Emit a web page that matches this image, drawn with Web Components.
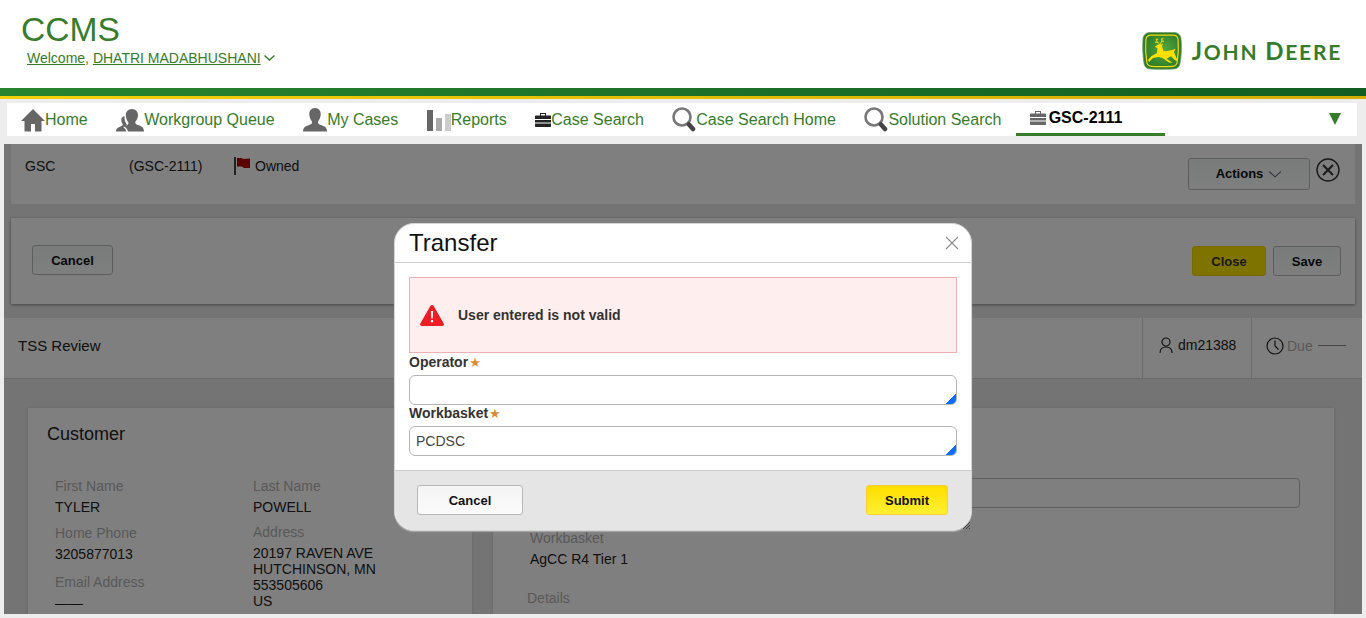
<!DOCTYPE html>
<html lang="en"><head><meta charset="utf-8"><title>CCMS</title>
<style>
html,body{margin:0;height:618px;overflow:hidden;background:#ededed;font-family:"Liberation Sans",Arial,sans-serif;color:#222}
</style></head><body>
<ccms-app></ccms-app>
<script>
const ICONS={
home:'<svg width="24" height="24" viewBox="0 0 24 24"><path fill="#666" d="M12 1 0 13h3.500v10.500h6.500V16h4v7.500h6.500V13H24z"/></svg>',
group:'<svg width="28" height="24" viewBox="0 0 28 24"><path fill="#666" d="M16 1c-4 0-6.500 3-6.200 6.500.2 2.600 1 4.800 2.400 6.500.5 1.200.2 2.300-.8 2.900l-3 1.500C10 19.500 11.500 21 12 23.500h16c0-3-1.400-4.600-4.500-5.900l-3-1.200c-1.200-.6-1.500-1.700-1-2.800 1.400-1.700 2.300-3.900 2.500-6.200C22.200 4 20 1 16 1z"/><path fill="#666" d="M8.500 8C6 8.500 5 10.500 5.300 12.800c.2 1.300.6 2.400 1.300 3.300.2.800 0 1.300-.7 1.700l-2.600 1.200C1.200 19.900 0 21 0 23.500h10.300c-.3-2-1.700-3.500-3-4.300l2.900-1.500c.7-.5.6-1 .2-1.800-.9-1.300-1.700-3.300-1.900-5.600z"/></svg>',
person:'<svg width="24" height="24" viewBox="0 0 24 24"><path fill="#666" d="M12 0C8 0 6 3 6.300 6.500c.2 2.800 1.100 5 2.500 6.700.5 1.300.2 2.300-1 3L3 18.200C1 19.200 0 20.800 0 23.500h24c0-2.700-1-4.300-3-5.300l-4.800-2c-1.200-.7-1.500-1.700-1-3 1.400-1.700 2.300-3.900 2.500-6.700C18 3 16 0 12 0z"/></svg>',
bars:'<svg width="24" height="22" viewBox="0 0 24 22"><rect x="0" y="1" width="6" height="21" fill="#666"/><rect x="9" y="9" width="6" height="13" fill="#aaa"/><rect x="18" y="5" width="6" height="17" fill="#ccc"/></svg>',
brief:c=>`<svg width="16" height="14" viewBox="0 0 16 14"><path fill="${c}" d="M5 0h6v2.500h-1V1H6v1.500H5zM1 2.500h14c.6 0 1 .4 1 1V6H0V3.500c0-.6.4-1 1-1zM0 7h16v2.500H0zM0 10.500h16V13c0 .6-.4 1-1 1H1c-.6 0-1-.4-1-1z"/></svg>`,
search:'<svg width="24" height="26" viewBox="0 0 24 26"><circle cx="10" cy="10" r="8.500" fill="none" stroke="#777" stroke-width="2.600"/><path d="M17 17.500l4 4.500" stroke="#444" stroke-width="4.500" stroke-linecap="round"/></svg>',
chev:(c,w=11,h=6,s=1)=>`<svg width="${w}" height="${h}" viewBox="0 0 11 6"><path d="M.5.500 5.500 5l5-4.500" fill="none" stroke="${c}" stroke-width="${s}"/></svg>`
};
function def(name,css,html,init){
  customElements.define(name,class extends HTMLElement{
    constructor(){super();const r=this.attachShadow({mode:'open'});
      r.innerHTML='<style>'+css+'</style>'+(typeof html==='function'?html(this):html);}
    connectedCallback(){if(!this._done){this._done=1;if(init)init(this)}}
  });
}
def('cc-logo',`:host{display:flex;align-items:center;gap:10px}
.t{font-family:Lato,"Liberation Sans",sans-serif;font-weight:700;color:#367c2b;font-size:21px;letter-spacing:1.750px;white-space:nowrap;line-height:24px}
.b{font-size:24px}`,
`<svg width="40" height="38" viewBox="0 0 40 38">
<defs><radialGradient id="g" cx=".55" cy=".45" r=".6"><stop offset="0" stop-color="#55a83f"/><stop offset="1" stop-color="#2e7d2c"/></radialGradient></defs>
<path fill="#2f7a2c" stroke="#6d9f66" stroke-width=".8" d="M8 .5h24c4 0 6.500 2.500 7 6 .8 8 .5 17-1 25-.5 3-2.500 5.500-6.500 5.500-7.500.4-16 .4-23 0-4 0-6-2.500-6.500-5.500C.8 23.500.4 14.500 1 6.500 1.500 3 4 .5 8 .5z"/>
<path fill="url(#g)" stroke="#f0dc10" stroke-width="1.200" d="M9 3.200h22c3 0 4.800 1.800 5.100 4.300.6 7 .3 15-.9 22.500-.4 2.600-2 4.300-4.800 4.400-6.500.4-13.800.4-20.800 0-2.800-.1-4.400-1.800-4.800-4.400C3.600 22.500 3.300 14.500 3.900 7.500 4.200 5 6 3.200 9 3.200z"/>
<path fill="none" stroke="#ffde00" stroke-width="1" d="M17.500 12c-1.500-1-3-2.500-3.500-5.500M15.800 10.500 13 10M14.700 8.500 16 6.500M18.500 12c.8-1.500 1.500-3 1.200-5.500M19.500 9.500 22 9M19.700 7.500 21.500 6"/>
<path fill="#ffde00" d="M13 14.500 17 12l2.500.5 1.500-1-1 3 1.500 4.500c3 .5 5.500-.5 9-1l3-1.500-1.500 3.500 1 2.500 3 7-3-1.200-4-4-4.500 2.500 6 4-3.500-.2-6.500-4.500-4-1-5.500 1L7 30l-1-2 3.500-4 5.500-3 .5-4.500-2-1.500z"/></svg>
<div class="t"><span class="b">J</span>OHN <span class="b">D</span>EERE</div>`);
def('cc-header',`:host{display:flex;justify-content:space-between;height:88px;background:#fff;box-sizing:border-box;padding:0 24px 0 21px}
h1{margin:0;font-weight:400;font-size:33.600px;line-height:38px;color:#367c2b;padding-top:11px}
.w{margin:1px 0 0 6px;font-size:14px;line-height:16px;color:#367c2b;display:flex;align-items:center}
.w span{white-space:pre}
u{text-underline-offset:1px}
.w svg{margin-left:3px}
cc-logo{align-self:flex-start;margin-top:32px}`,
`<div><h1>CCMS</h1><p class="w"><span><u>Welcome,</u> <u>DHATRI MADABHUSHANI</u></span>${ICONS.chev('#367c2b',11,6,1.400)}</p></div><cc-logo></cc-logo>`);
def('cc-band',`:host{display:block;height:8px;background:linear-gradient(90deg,#28842f,#125e22);border-bottom:3px solid;border-image:linear-gradient(90deg,#f5d000,#d6ac00) 1}`,'');
def('cc-nav-item',`:host{display:flex;align-items:center;height:33px;padding:0 14.250px;color:#367c2b;font-size:16px;white-space:nowrap;box-sizing:border-box}
:host(:first-child){padding-left:14px}
:host([active]){width:149px;color:#000;font-weight:700;border-bottom:3px solid #367c2b;padding-left:14px}
::slotted(span){display:flex;align-items:center}
:host([active]) ::slotted(span){margin-right:3px}`,'<slot name="icon"></slot><slot></slot>');
def('cc-nav',`:host{display:flex;align-items:stretch;margin:4px 9px 8px 7px;height:33px;background:#fff;position:relative}
.tri{margin:10px 16px 0 auto;width:0;height:0;border-left:6px solid transparent;border-right:6px solid transparent;border-top:12px solid #367c2b}`,
`<slot></slot><div class="tri"></div>`);
def('cc-button',`:host{display:inline-flex;align-items:center;justify-content:center;gap:5px;box-sizing:border-box;height:30px;border:1px solid #b8b8b8;border-radius:3px;background:linear-gradient(#f4f4f4,#fbfbfb);color:#111;font-size:13px;font-weight:700}
:host([kind=yellow]){background:linear-gradient(#ffdd00,#fff033);border-color:#ffcc33}
:host([kind=close]){background:#ffe600;border-color:#f0d000;color:#333}
:host([kind=tint]){background:linear-gradient(#f3f8f8,#fdfdfd);border-color:#bbb}`,'<slot></slot>');
def('cc-card',`:host{display:block;background:#fff;box-sizing:border-box}`,'<slot></slot>');
def('cc-field',`:host{display:block;font-size:14px;line-height:16px}
.l{color:#b2b2b2;margin-bottom:5px}
.v{color:#222}`,el=>`<div class="l">${el.getAttribute('label')}</div><div class="v"><slot></slot></div>`);
def('cc-modal',`:host{position:absolute;left:390px;top:79px;width:578px;height:308px;box-sizing:border-box;background:#fff;border:1px solid #d4d4d4;border-radius:20px;display:flex;flex-direction:column;color:#333;font-size:14px;box-shadow:0 1px 1px #aaa}
header{display:flex;justify-content:space-between;align-items:center;height:39px;border-bottom:1px solid #ccc;padding:0 14px 1px;flex:none;box-sizing:border-box}
h2{margin:0;font-weight:400;font-size:24px;color:#111}
main{flex:1;padding:14px 14px 0}
.al{display:flex;align-items:center;gap:14px;height:76px;box-sizing:border-box;background:#ffeeee;border:1px solid #edb1b4;padding-left:10px;font-weight:700}
label{display:block;font-weight:700;line-height:16px}
i{color:#d98c33;font:normal 13px/0 "DejaVu Sans",sans-serif;margin-left:1px}
.in{margin-top:5px;height:30px;box-sizing:border-box;border:1px solid #b5b5b5;border-radius:6px;padding:0 6px;line-height:28px;background:linear-gradient(135deg,#fff calc(100% - 7.500px),#0d6efd calc(100% - 7.500px));color:#444}
footer{flex:none;height:60px;box-sizing:border-box;background:#e5e5e5;border-top:1px solid #ccc;display:flex;justify-content:space-between;padding:14px 23px 0 22px;position:relative;border-radius:0 0 19px 19px}
.grip{position:absolute;right:0;bottom:0}
cc-button.c{width:106px}
cc-button.s{width:82px}`,
`<header><h2>Transfer</h2><svg width="14" height="14" viewBox="0 0 14 14" style="margin-right:-2px"><path d="M1 1l12 12M13 1 1 13" stroke="#8b8b8b" stroke-width="1.100"/></svg></header>
<main><div class="al"><svg width="24" height="21" viewBox="0 0 24 21"><path fill="#ee1c25" d="M12 0c.7 0 1.300.4 1.700 1l10 17.500c.7 1.200-.2 2.500-1.500 2.500H1.800C.5 21-.4 19.700.3 18.500L10.300 1c.4-.6 1-1 1.700-1z"/><path fill="#fff" d="M10.900 6h2.200l-.4 7.500h-1.400zM10.900 15h2.200v2.300h-2.200z"/></svg><span>User entered is not valid</span></div>
<label style="margin-top:1px">Operator<i>★</i></label><div class="in"></div>
<label>Workbasket<i>★</i></label><div class="in">PCDSC</div></main>
<footer><cc-button class="c" kind="plain">Cancel</cc-button><cc-button class="s" kind="yellow">Submit</cc-button>
<svg class="grip" width="10" height="10" viewBox="0 0 10 10"><path d="M9 2 2 9M9 5 5 9M9 8 8 9" stroke="#444" stroke-width="1"/></svg></footer>`);
def('cc-case',`:host{display:block;height:470px;margin:0 4px 0 4px;position:relative;overflow:hidden;background:#e9e9e9;font-size:14px}
.overlay{position:absolute;inset:0;background:rgba(0,0,0,.5)}
.c1{margin:0 7px 14px 7px;height:60px;display:flex;align-items:flex-start;padding:14px 14px 0 14px;background:#fff;line-height:16px;box-sizing:border-box;position:relative}
.c1 span{display:block}
.c1 .g{width:104px}.c1 .n{width:105px}
.c1 .o{display:flex;align-items:center;gap:5px;height:18px;margin-top:-1px}
.c2{margin:0 7px 14px 7px;height:86px;background:#fff;box-shadow:0 1px 3px rgba(0,0,0,.4);display:flex;padding:27px 14px 0 21px;box-sizing:border-box}
.c2 .cn{width:81px}
.cl{width:74px;margin-left:auto;margin-top:1px}
.sv{width:68px;margin-left:7px;margin-top:1px}
.c3{height:61px;background:#fff;border-bottom:1px solid #d4d4d4;display:flex;box-sizing:border-box;padding-left:14px;align-items:stretch;font-size:14px}
.c3 .t{flex:1;line-height:55px;color:#222;font-size:15px}
.c3 .u{width:109px;border-left:1px solid #d4d4d4;display:flex;align-items:center;gap:5px;padding:0 0 6px 16px;box-sizing:border-box}
.c3 .d{width:111px;border-left:1px solid #d4d4d4;display:flex;align-items:center;padding:0 0 5px 14px;box-sizing:border-box;color:#b2b2b2}
.c3 .ln{display:block;width:28px;height:1px;background:#888;margin-left:5px}
.cols{display:flex;padding:29px 28px 0 24px;gap:21px}
.cust{width:444px;height:300px;padding:16px 0 0 19px;box-shadow:0 0 3px rgba(0,0,0,.15)}
.cust h3{margin:0;font-weight:400;font-size:18px;line-height:20px;color:#222}
.grid{display:grid;grid-template-columns:198px 1fr;margin:34px 0 0 8px}
.stack cc-field+cc-field{margin-top:10px}
.lines{line-height:16px}
.det{flex:1;height:300px;box-shadow:0 0 3px rgba(0,0,0,.15);padding:70px 34px 0 34px;box-sizing:border-box}
.box{height:30px;border:1px solid #b8b8b8;border-radius:4px;box-sizing:border-box}
.det cc-field{margin:22px 0 0 3px}
.dl{margin-top:23px;color:#b2b2b2;line-height:16px}`,
`<cc-card class="c1"><span class="g">GSC</span><span class="n">(GSC-2111)</span><span class="o"><svg width="16" height="18" viewBox="0 0 16 18"><path d="M1 0v18" stroke="#333" stroke-width="1.800"/><path fill="#b80000" d="M3 1h4.500L9 2l7-.5V11h-6L8 9.500H3z"/></svg>Owned</span>
<cc-button kind="tint" style="position:absolute;left:1177px;top:14px;width:122px;height:32px">Actions ${ICONS.chev('#667',14,7)}</cc-button>
<svg style="position:absolute;left:1305px;top:14px" width="24" height="24" viewBox="0 0 24 24"><circle cx="12" cy="12" r="11" fill="none" stroke="#333" stroke-width="1.400"/><path d="M7 7l10 10M17 7 7 17" stroke="#333" stroke-width="2"/></svg></cc-card>
<cc-card class="c2"><cc-button class="cn" kind="tint">Cancel</cc-button><cc-button class="cl" kind="close">Close</cc-button><cc-button class="sv" kind="tint">Save</cc-button></cc-card>
<cc-card class="c3"><div class="t">TSS Review</div><div class="u"><svg width="14" height="16" viewBox="0 0 14 16"><circle cx="7" cy="5" r="4" fill="none" stroke="#222" stroke-width="1.200"/><path d="M1 16c0-4 2-6 6-6s6 2 6 6" fill="none" stroke="#222" stroke-width="1.200"/></svg><span>dm21388</span></div>
<div class="d"><svg width="18" height="18" viewBox="0 0 18 18"><circle cx="9" cy="9" r="8" fill="none" stroke="#222" stroke-width="1.200"/><path d="M9 3.500V9l3.500 3.500" fill="none" stroke="#222" stroke-width="1.200"/></svg><span style="margin-left:3px">Due</span><span class="ln"></span></div></cc-card>
<div class="cols"><cc-card class="cust"><h3>Customer</h3><div class="grid">
<div class="stack"><cc-field label="First Name">TYLER</cc-field><cc-field label="Home Phone">3205877013</cc-field><cc-field label="Email Address" style="margin-top:12px">&#x2014;&#x2014;</cc-field></div>
<div class="stack"><cc-field label="Last Name">POWELL</cc-field><cc-field label="Address" style="margin-top:9px"><div class="lines">20197 RAVEN AVE<br>HUTCHINSON, MN<br>553505606<br>US</div></cc-field></div>
</div></cc-card>
<cc-card class="det"><div class="box"></div><cc-field label="Workbasket">AgCC R4 Tier 1</cc-field><div class="dl">Details</div></cc-card></div>
<div class="overlay"></div><cc-modal></cc-modal>`);
def('ccms-app',`:host{display:block}`,
`<cc-header></cc-header><cc-band></cc-band>
<cc-nav>
<cc-nav-item><span slot="icon">${ICONS.home}</span>Home</cc-nav-item>
<cc-nav-item><span slot="icon">${ICONS.group}</span>Workgroup Queue</cc-nav-item>
<cc-nav-item><span slot="icon">${ICONS.person}</span>My Cases</cc-nav-item>
<cc-nav-item><span slot="icon">${ICONS.bars}</span>Reports</cc-nav-item>
<cc-nav-item><span slot="icon">${ICONS.brief('#222')}</span>Case Search</cc-nav-item>
<cc-nav-item><span slot="icon">${ICONS.search}</span>Case Search Home</cc-nav-item>
<cc-nav-item><span slot="icon">${ICONS.search}</span>Solution Search</cc-nav-item>
<cc-nav-item active><span slot="icon">${ICONS.brief('#666')}</span>GSC-2111</cc-nav-item>
</cc-nav><cc-case></cc-case>`);
</script></body></html>
